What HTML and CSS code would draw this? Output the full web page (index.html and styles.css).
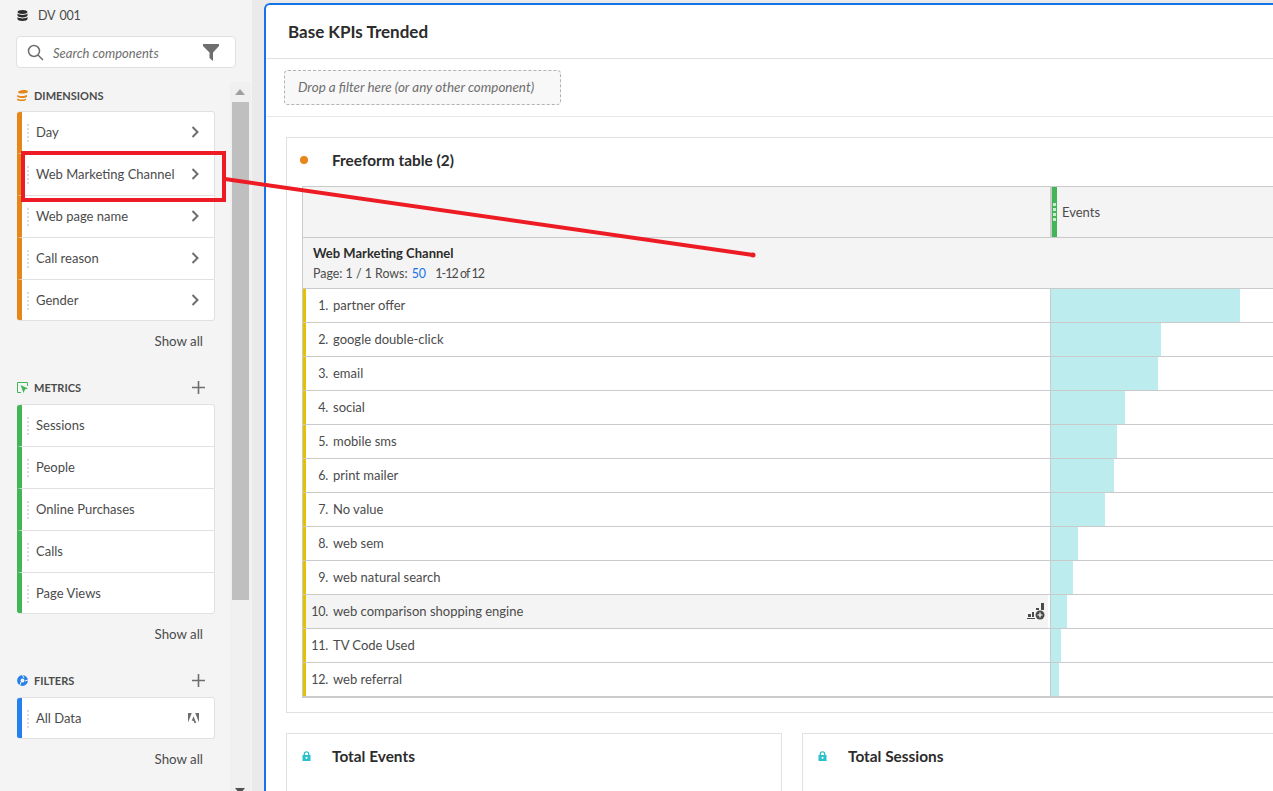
FILE: index.html
```html
<!DOCTYPE html>
<html lang="en">
<head>
    <meta charset="UTF-8">
    <title>Base KPIs Trended</title>
    <link rel="stylesheet" href="styles.css">
</head>
<body>
<div class="app">

    <aside class="rail">
        <div class="rail-top">
            <div class="source">
                <svg class="source-icon" width="11" height="11" viewBox="0 0 11 11"><path fill="#2c2c2c" d="M0.5 2C0.5 0.8 2.8 0 5.5 0S10.500 0.800 10.500 2 8.200 4 5.500 4 0.500 3.200 0.500 2ZM0.500 3.600C1.500 4.600 3.500 5 5.500 5S9.500 4.600 10.500 3.600V5.500C10.500 6.600 8.200 7.400 5.500 7.400S0.500 6.600 0.500 5.500ZM0.500 7C1.500 8 3.500 8.400 5.500 8.400S9.500 8 10.500 7V9C10.500 10.200 8.200 11 5.500 11S0.500 10.200 0.500 9Z"/></svg>
                <span>DV 001</span>
            </div>
            <div class="search">
                <svg width="17" height="17" viewBox="0 0 17 17" fill="none" stroke="#6e6e6e" stroke-width="1.500"><circle cx="7" cy="7" r="5.500"/><path d="M11 11l5 5"/></svg>
                <span class="search-text">Search components</span>
                <svg class="funnel" width="16" height="17" viewBox="0 0 16 17"><path fill="#6e6e6e" d="M0 0H16V2L10 8.500V17L6.500 14V8.500L0 2Z"/></svg>
            </div>
        </div>

        <div class="rail-body">
            <div class="rail-list">
                <section class="group">
                    <div class="group-head">
                        <svg width="11" height="11" viewBox="0 0 11 11"><path fill="#e68619" d="M1 2.500C1 1 4 0 7 0 9 0 11 .5 11 1.500S9 3.500 6 3.500 2 3.500 1 2.500ZM0 5C1 5.800 3 6 5 6 7 6 9 5.500 10 5V6.500C10 7.500 7 8 5 8 2 8 0 7 0 6ZM0 8.500C1 9.200 3 9.500 5 9.500 7 9.500 8 9.200 9 8.800V9.500C9 10.500 7 11 5 11 2 11 0 10.500 0 9.500Z"/></svg>
                        <span class="group-title">DIMENSIONS</span>
                    </div>
                    <ul class="cards orange">
                        <li>Day<svg class="chev" width="8" height="12" viewBox="0 0 8 12"><path d="M1.500 1l5 5-5 5" fill="none" stroke="#6e6e6e" stroke-width="2"/></svg></li>
                        <li>Web Marketing Channel<svg class="chev" width="8" height="12" viewBox="0 0 8 12"><path d="M1.500 1l5 5-5 5" fill="none" stroke="#6e6e6e" stroke-width="2"/></svg></li>
                        <li>Web page name<svg class="chev" width="8" height="12" viewBox="0 0 8 12"><path d="M1.500 1l5 5-5 5" fill="none" stroke="#6e6e6e" stroke-width="2"/></svg></li>
                        <li>Call reason<svg class="chev" width="8" height="12" viewBox="0 0 8 12"><path d="M1.500 1l5 5-5 5" fill="none" stroke="#6e6e6e" stroke-width="2"/></svg></li>
                        <li>Gender<svg class="chev" width="8" height="12" viewBox="0 0 8 12"><path d="M1.500 1l5 5-5 5" fill="none" stroke="#6e6e6e" stroke-width="2"/></svg></li>
                    </ul>
                    <div class="show-all">Show all</div>
                </section>

                <section class="group">
                    <div class="group-head">
                        <svg width="11" height="11" viewBox="0 0 11 11"><path fill="none" stroke="#44b556" stroke-width="1" d="M4 10.500H.5V.5H10.500V4"/><path fill="#44b556" d="M3.500 3L11 6.500 8 7.500 6.500 11Z"/></svg>
                        <span class="group-title">METRICS</span>
                        <svg class="plus" width="13" height="13" viewBox="0 0 13 13"><path d="M6.500 0v13M0 6.500h13" stroke="#6e6e6e" stroke-width="1.600"/></svg>
                    </div>
                    <ul class="cards green">
                        <li>Sessions</li>
                        <li>People</li>
                        <li>Online Purchases</li>
                        <li>Calls</li>
                        <li>Page Views</li>
                    </ul>
                    <div class="show-all">Show all</div>
                </section>

                <section class="group">
                    <div class="group-head">
                        <svg width="11" height="11" viewBox="0 0 11 11"><circle cx="5.500" cy="5.500" r="3.700" fill="none" stroke="#2680eb" stroke-width="3.400"/><path d="M5.500 0L7 3M11 5L8 6M3 10L4 7" stroke="#f4f4f4"/></svg>
                        <span class="group-title">FILTERS</span>
                        <svg class="plus" width="13" height="13" viewBox="0 0 13 13"><path d="M6.500 0v13M0 6.500h13" stroke="#6e6e6e" stroke-width="1.600"/></svg>
                    </div>
                    <ul class="cards blue">
                        <li>All Data
                            <svg class="adobe" width="11" height="10" viewBox="0 0 11 10"><path fill="#6e6e6e" d="M0 0H3.800L0 9.500ZM7.200 0H11V9.500ZM5.500 3.200L8.300 10H6.400L5.500 7.800H3.700Z"/></svg>
                        </li>
                    </ul>
                    <div class="show-all">Show all</div>
                </section>
            </div>

            <div class="scrollbar">
                <div class="arrow-up"></div>
                <div class="thumb"></div>
                <div class="arrow-down"></div>
            </div>
        </div>
    </aside>

    <main class="workspace">
        <div class="project">
            <header class="project-head">Base KPIs Trended</header>
            <div class="drop-row">
                <div class="drop-zone">Drop a filter here (or any other component)</div>
            </div>

            <div class="project-body">
                <section class="panel">
                    <div class="panel-head">
                        <span class="dot"></span>
                        <h2 class="panel-title">Freeform table (2)</h2>
                    </div>

                    <div class="table">
                        <div class="thead-top">
                            <div class="thead-blank"></div>
                            <div class="metric-head">
                                <span class="metric-band"><i></i><i></i><i></i><i></i></span>
                                <span class="metric-name">Events</span>
                            </div>
                        </div>
                        <div class="thead-sub">
                            <div class="dim-name">Web Marketing Channel</div>
                            <div class="dim-page">Page: 1 / 1 Rows: <span class="rows-link">50</span> <span class="dim-count">1-12 of 12</span></div>
                        </div>

                        <div class="row"><div class="cell"><span class="num">1.</span>partner offer</div><div class="val"><div class="bar" style="width:189px"></div></div></div>
                        <div class="row"><div class="cell"><span class="num">2.</span>google double-click</div><div class="val"><div class="bar" style="width:110px"></div></div></div>
                        <div class="row"><div class="cell"><span class="num">3.</span>email</div><div class="val"><div class="bar" style="width:107px"></div></div></div>
                        <div class="row"><div class="cell"><span class="num">4.</span>social</div><div class="val"><div class="bar" style="width:74px"></div></div></div>
                        <div class="row"><div class="cell"><span class="num">5.</span>mobile sms</div><div class="val"><div class="bar" style="width:66px"></div></div></div>
                        <div class="row"><div class="cell"><span class="num">6.</span>print mailer</div><div class="val"><div class="bar" style="width:63px"></div></div></div>
                        <div class="row"><div class="cell"><span class="num">7.</span>No value</div><div class="val"><div class="bar" style="width:54px"></div></div></div>
                        <div class="row"><div class="cell"><span class="num">8.</span>web sem</div><div class="val"><div class="bar" style="width:27px"></div></div></div>
                        <div class="row"><div class="cell"><span class="num">9.</span>web natural search</div><div class="val"><div class="bar" style="width:22px"></div></div></div>
                        <div class="row is-hover"><div class="cell"><span class="num">10.</span>web comparison shopping engine
                            <svg class="breakdown" width="18" height="17" viewBox="0 0 18 17"><path fill="#4b4b4b" d="M1 11h3v3H1zM5 9h2v5H5zM9 5h3v2H9zM14 0h3v7h-3zM0 15h8v1H0z"/><circle cx="13" cy="12" r="4.500" fill="#4b4b4b"/><path d="M13 9.500v5M10.500 12h5" stroke="#fff" stroke-width="1.200"/></svg>
                        </div><div class="val"><div class="bar" style="width:16px"></div></div></div>
                        <div class="row"><div class="cell"><span class="num">11.</span>TV Code Used</div><div class="val"><div class="bar" style="width:10px"></div></div></div>
                        <div class="row"><div class="cell"><span class="num">12.</span>web referral</div><div class="val"><div class="bar" style="width:8px"></div></div></div>
                    </div>
                </section>

                <div class="tiles">
                    <section class="tile tile-left">
                        <svg class="lock" width="9" height="10" viewBox="0 0 9 10"><path fill="none" stroke="#2ac1cc" stroke-width="1.300" d="M2.300 4.500V2.800C2.300 .2 6.700 .2 6.700 2.800V4.500"/><path fill="#2ac1cc" fill-rule="evenodd" d="M.5 4H8.500V10H.5ZM4.500 5.800a1 1 0 1 0 .01 0Z"/></svg>
                        <h2 class="panel-title">Total Events</h2>
                    </section>
                    <section class="tile tile-right">
                        <svg class="lock" width="9" height="10" viewBox="0 0 9 10"><path fill="none" stroke="#2ac1cc" stroke-width="1.300" d="M2.300 4.500V2.800C2.300 .2 6.700 .2 6.700 2.800V4.500"/><path fill="#2ac1cc" fill-rule="evenodd" d="M.5 4H8.500V10H.5ZM4.500 5.800a1 1 0 1 0 .01 0Z"/></svg>
                        <h2 class="panel-title">Total Sessions</h2>
                    </section>
                </div>
            </div>
        </div>
    </main>
</div>

<!-- red callout drawn over the page -->
<svg class="callout" width="1273" height="791" viewBox="0 0 1273 791">
    <rect x="23" y="153" width="201" height="47" fill="none" stroke="#ed1c24" stroke-width="4"/>
    <path d="M225 179L753 255" stroke="#ed1c24" stroke-width="4"/>
    <circle cx="753" cy="255" r="2.500" fill="#ed1c24"/>
</svg>
</body>
</html>
```

FILE: styles.css
```css
* {
    box-sizing: border-box;
}

body {
    margin: 0;
    height: 791px;
    overflow: hidden;
    font-family: "Lato", "Open Sans", sans-serif;
    font-size: 13px;
    color: #4b4b4b;
    background-color: #eaeaea;
}

.app {
    display: flex;
    height: 791px;
}

/* left rail */
.rail {
    width: 252px;
    flex: none;
    display: flex;
    flex-direction: column;
    background-color: #f4f4f4;
}

.rail-top {
    height: 82px;
    padding: 0 16px;
    flex: none;
}

.source {
    display: flex;
    align-items: center;
    height: 30px;
    padding-left: 1px;
    gap: 10px;
    font-size: 12.500px;
    letter-spacing: -0.3px;
    word-spacing: 2px;
    color: #4b4b4b;
}

.search {
    display: flex;
    align-items: center;
    width: 220px;
    height: 32px;
    margin-top: 6px;
    padding: 0 16px 0 10px;
    background-color: #fff;
    border: 1px solid #e1e1e1;
    border-radius: 4px;
}

.search-text {
    margin-left: 9px;
    padding-top: 2px;
    font-style: italic;
    font-size: 13px;
    color: #6e6e6e;
}

.funnel {
    margin-left: auto;
}

.rail-body {
    flex: 1;
    display: flex;
    min-height: 0;
}

.rail-list {
    width: 230px;
    padding-left: 17px;
    padding-top: 7px;
}

.group {
    width: 198px;
    margin-bottom: 32px;
}

.group-head {
    display: flex;
    align-items: center;
    height: 14px;
    padding-bottom: 2px;
    margin-bottom: 8px;
    gap: 6px;
}

.group + .group .group-head {
    margin-bottom: 9px;
}

.group-title {
    font-size: 11px;
    font-weight: 700;
    color: #4b4b4b;
}

.plus {
    margin-left: auto;
    margin-right: 10px;
}

.cards {
    list-style: none;
    margin: 0;
    padding: 0;
    background-color: #fff;
    border: 1px solid #e1e1e1;
    border-left: none;
    border-radius: 3px;
    overflow: hidden;
}

.cards li {
    position: relative;
    display: flex;
    align-items: center;
    justify-content: space-between;
    height: 42px;
    padding: 0 15px 2px 14px;
    border-left: 5px solid;
    border-bottom: 1px solid #e1e1e1;
    font-size: 13px;
    color: #4b4b4b;
}

.cards li:last-child {
    height: 40px;
    padding-bottom: 0;
    border-bottom: none;
}

/* grip */
.cards li::before {
    content: "";
    position: absolute;
    left: 5px;
    top: 12px;
    height: 18px;
    border-left: 2px dotted #dcdcdc;
}

.orange li { border-left-color: #e68619; }
.green li { border-left-color: #44b556; }
.blue li { border-left-color: #2680eb; }

.show-all {
    margin-top: 12px;
    padding-right: 12px;
    text-align: right;
    font-size: 13.300px;
    line-height: 16px;
}

.scrollbar {
    width: 21px;
    background-color: #f0f0f0;
    position: relative;
    padding: 20px 2px 0;
}

.thumb {
    height: 498px;
    background-color: #bfbfbf;
}

.arrow-up,
.arrow-down {
    position: absolute;
    left: 5px;
    width: 0;
    height: 0;
    border-left: 5px solid transparent;
    border-right: 5px solid transparent;
}

.arrow-up {
    top: 7px;
    border-bottom: 6px solid #a0a0a0;
}

.arrow-down {
    top: 706px;
    border-top: 6px solid #505050;
}

/* project */
.workspace {
    flex: 1;
    min-width: 0;
    padding: 3px 0 0 12px;
    overflow: hidden;
}

.project {
    width: 1100px;
    height: 800px;
    background-color: #fff;
    border-top: 2px solid #1473e6;
    border-left: 2px solid #1473e6;
    border-top-left-radius: 6px;
}

.project-head {
    height: 54px;
    padding: 17px 0 0 22px;
    border-bottom: 1px solid #e1e1e1;
    font-size: 17px;
    line-height: 20px;
    font-weight: 700;
    color: #2c2c2c;
}

.drop-row {
    height: 58px;
    padding: 11px 18px;
    border-bottom: 1px solid #e8e8e8;
}

.drop-zone {
    width: 277px;
    height: 35px;
    padding-left: 13px;
    line-height: 33px;
    background-color: #f8f8f8;
    border: 1px dashed #b3b3b3;
    border-radius: 4px;
    font-style: italic;
    font-size: 13.400px;
    color: #6e6e6e;
}

.project-body {
    padding: 20px 0 0 20px;
}

.panel {
    height: 576px;
    padding-left: 15px;
    border: 1px solid #e1e1e1;
}

.panel-head {
    display: flex;
    align-items: center;
    height: 48px;
    padding-bottom: 4px;
}

.dot {
    width: 8px;
    height: 8px;
    margin-left: -2px;
    margin-right: 24px;
    border-radius: 50%;
    background-color: #e68619;
}

.panel-title {
    margin: 0;
    font-size: 15.400px;
    font-weight: 700;
    color: #2c2c2c;
}

.table {
    border-left: 1px solid #cacaca;
    border-bottom: 1px solid #cacaca;
}

.thead-top {
    display: flex;
    height: 52px;
    background-color: #f4f4f4;
    border-top: 1px solid #cacaca;
    border-bottom: 1px solid #cacaca;
}

.thead-blank {
    width: 747px;
}

.metric-head {
    display: flex;
    align-items: center;
    flex: 1;
    border-left: 2px solid #cacaca;
}

.metric-band {
    display: flex;
    flex-direction: column;
    justify-content: center;
    align-items: center;
    gap: 2px;
    align-self: stretch;
    width: 5px;
    background-color: #44b556;
}

.metric-band i {
    width: 3px;
    height: 3px;
    background-color: #c9eecf;
}

.metric-name {
    margin-left: 5px;
    font-size: 13px;
}

.thead-sub {
    height: 51px;
    padding: 6px 10px 0;
    background-color: #f4f4f4;
    border-bottom: 1px solid #cacaca;
}

.dim-name {
    font-size: 13px;
    line-height: 18px;
    font-weight: 700;
    color: #2c2c2c;
}

.dim-page {
    padding-top: 2px;
    font-size: 12.400px;
    line-height: 20px;
}

.rows-link {
    margin: 0 3px 0 1px;
    color: #1473e6;
}

.dim-count {
    margin-left: 3px;
    letter-spacing: -0.9px;
}

.row {
    display: flex;
    height: 34px;
    border-bottom: 1px solid #cacaca;
}

.cell {
    display: flex;
    align-items: center;
    width: 747px;
    padding-bottom: 2px;
    flex: none;
    border-left: 3px solid #e5c100;
    font-size: 13px;
}

.num {
    width: 27px;
    padding-top: 2px;
    padding-right: 5px;
    font-size: 12.500px;
    letter-spacing: -0.2px;
    text-align: right;
    flex: none;
}

.val {
    flex: 1;
    border-left: 1px solid #cacaca;
}

.bar {
    height: 100%;
    background-color: #bcecee;
}

.is-hover .cell {
    background-color: #f4f4f4;
    border-right: 2px solid #fff;
}

.breakdown {
    margin-left: auto;
    margin-right: 3px;
    margin-top: 2px;
}

.tiles {
    display: flex;
    margin-top: 20px;
    gap: 20px;
}

.tile {
    display: flex;
    align-items: center;
    height: 60px;
    padding-bottom: 14px;
    border: 1px solid #e1e1e1;
}

.tile-left {
    width: 496px;
}

.tile-right {
    flex: 1;
}

.lock {
    margin-left: 15px;
    margin-right: 21px;
}

/* annotation layer */
.callout {
    position: absolute;
    left: 0;
    top: 0;
    pointer-events: none;
}
```
